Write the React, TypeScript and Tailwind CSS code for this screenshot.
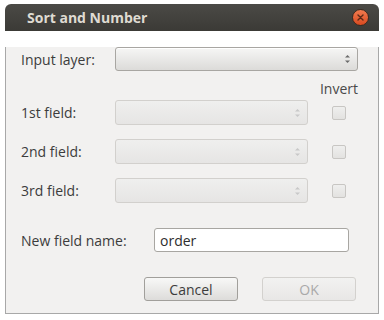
import React from "react";

const font = { fontFamily: '"Open Sans", "DejaVu Sans", sans-serif' };

function Arrows({ disabled }: { disabled?: boolean }) {
  const c = disabled ? "#c8c8c8" : "#6a6a6a";
  return (
    <svg width="7" height="12" viewBox="0 0 7 12" className="shrink-0">
      <path d="M1 4.5 L3.5 2 L6 4.5 Z" fill={c} />
      <path d="M1 7.5 L3.5 10 L6 7.5 Z" fill={c} />
    </svg>
  );
}

function Combo({ disabled, className }: { disabled?: boolean; className: string }) {
  return (
    <div
      className={
        "flex items-center justify-end pr-[6px] rounded-[3px] border " +
        (disabled
          ? "border-[#d2d0cd] bg-gradient-to-b from-[#efefee] to-[#e6e5e4]"
          : "border-[#a8a6a2] bg-gradient-to-b from-[#f6f6f5] to-[#dcdbd9] shadow-[inset_0_1px_0_#ffffff]") +
        " " +
        className
      }
    >
      <Arrows disabled={disabled} />
    </div>
  );
}

function Check() {
  return (
    <div className="w-[14px] h-[14px] rounded-[2px] border border-[#c8c6c3] bg-gradient-to-b from-[#efefee] to-[#e3e2e0]" />
  );
}

export default function App() {
  return (
    <div className="w-[384px] h-[320px] bg-white pt-[4px] pl-[5px]" style={font}>
      <div className="w-[374px]">
        <div className="h-[27px] rounded-t-[6px] bg-gradient-to-b from-[#4b4a46] to-[#3b3a36] flex items-center pl-[22px] pr-[10px]">
          <span className="text-[14px] font-bold text-[#dfdbd2] flex-1 leading-none">Sort and Number</span>
          <div className="w-[17px] h-[17px] rounded-full bg-gradient-to-b from-[#f07a4e] to-[#d94a1f] border border-[#3a2a20] flex items-center justify-center">
            <svg width="7" height="7" viewBox="0 0 7 7">
              <path d="M1 1 L6 6 M6 1 L1 6" stroke="#5a2a18" strokeWidth="1.4" strokeLinecap="round" />
            </svg>
          </div>
        </div>
        <div className="bg-[#f2f1f0] border-x border-b border-[#a8a8a8] pl-[15px] pr-[20px] pb-[12px] text-[14px] text-[#3c3c3c]">
          <div className="mt-[16px] h-[24px] flex items-center">
            <span className="w-[94px]">Input layer:</span>
            <Combo className="flex-1 h-[24px]" />
          </div>
          <div className="mt-[7px] h-[20px] flex items-center justify-end">
            <span className="text-[#4a4a4a]">Invert</span>
          </div>
          {["1st field:", "2nd field:", "3rd field:"].map((l, i) => (
            <div key={l} className={(i === 0 ? "mt-[2px]" : "mt-[14px]") + " h-[25px] flex items-center"}>
              <span className="w-[94px]">{l}</span>
              <Combo disabled className="w-[193px] h-[25px]" />
              <div className="ml-[24px]">
                <Check />
              </div>
            </div>
          ))}
          <div className="mt-[25px] h-[24px] flex items-center">
            <span className="w-[133px]">New field name:</span>
            <div className="w-[195px] h-[24px] rounded-[3px] border border-[#a8a6a2] bg-white flex items-center pl-[5px] text-[#2e2e2e]">
              order
            </div>
          </div>
          <div className="mt-[25px] h-[24px] flex justify-end gap-[24px] pr-[2px]">
            <div className="w-[94px] h-[24px] rounded-[3px] border border-[#a19f9b] bg-gradient-to-b from-[#f8f8f7] to-[#dddcda] flex items-center justify-center text-[#3c3c3c]">
              Cancel
            </div>
            <div className="w-[94px] h-[24px] rounded-[3px] border border-[#d3d1ce] bg-gradient-to-b from-[#f2f2f1] to-[#e8e7e6] flex items-center justify-center text-[#a9a9a9]">
              OK
            </div>
          </div>
        </div>
      </div>
    </div>
  );
}
